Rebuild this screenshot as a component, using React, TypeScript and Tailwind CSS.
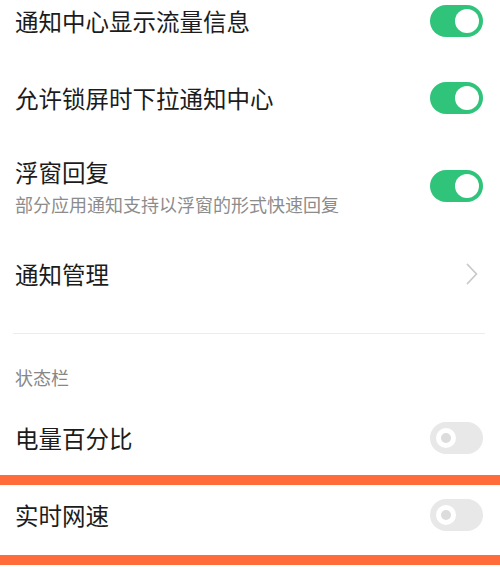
import React from "react";

const font = { fontFamily: '"Noto Sans CJK SC", "Noto Sans", sans-serif' };

function Toggle({ on }: { on: boolean }) {
  if (on) {
    return (
      <div className="w-[53px] h-[32px] rounded-full bg-[#30c47b] flex items-center justify-end pr-[4px] shrink-0">
        <div className="w-[24px] h-[24px] rounded-full bg-white" />
      </div>
    );
  }
  return (
    <div className="w-[53px] h-[32px] rounded-full bg-[#e8e8e8] flex items-center pl-[6px] shrink-0">
      <div className="w-[20px] h-[20px] rounded-full bg-white flex items-center justify-center">
        <div className="w-[10px] h-[10px] rounded-full bg-[#dcdcdc]" />
      </div>
    </div>
  );
}

function Chevron() {
  return (
    <svg width="12" height="22" viewBox="0 0 12 22" className="shrink-0 mr-[5px]" aria-hidden="true">
      <path d="M1.5 1.5 L10.5 11 L1.5 20.5" fill="none" stroke="#c9c9c9" strokeWidth="1.8" strokeLinecap="round" strokeLinejoin="round" />
    </svg>
  );
}

function Row({ title, right, className }: { title: string; right: React.ReactNode; className: string }) {
  return (
    <div className={`flex items-center justify-between pl-[15px] pr-[17px] ${className}`}>
      <span className="text-[23.5px] leading-[30px] text-[#1c1c1c]">{title}</span>
      {right}
    </div>
  );
}

export default function App() {
  return (
    <div className="w-[500px] h-[570px] bg-white overflow-hidden flex flex-col" style={font}>
      <Row title="通知中心显示流量信息" right={<Toggle on />} className="h-[59px] pb-[17px]" />
      <Row title="允许锁屏时下拉通知中心" right={<Toggle on />} className="h-[78px]" />

      <div className="h-[98px] flex items-center justify-between pl-[15px] pr-[17px]">
        <div className="flex flex-col">
          <span className="text-[23.5px] leading-[30px] text-[#1c1c1c]">浮窗回复</span>
          <span className="mt-[5px] text-[18px] leading-[24px] text-[#8c8c8c] whitespace-nowrap">部分应用通知支持以浮窗的形式快速回复</span>
        </div>
        <Toggle on />
      </div>

      <Row title="通知管理" right={<Chevron />} className="h-[78px]" />

      <div className="mt-[20px] ml-[13px] mr-[15px] h-px bg-[#ececec]" />

      <div className="h-[66px] pt-[31px] pl-[15px]">
        <span className="text-[18px] leading-[24px] text-[#878787]">状态栏</span>
      </div>

      <Row title="电量百分比" right={<Toggle on={false} />} className="h-[75px]" />
      <div className="h-[10px] bg-[#ff6b3b]" />
      <Row title="实时网速" right={<Toggle on={false} />} className="h-[70px] pb-[10px]" />
      <div className="h-[10px] bg-[#ff6b3b]" />
    </div>
  );
}
